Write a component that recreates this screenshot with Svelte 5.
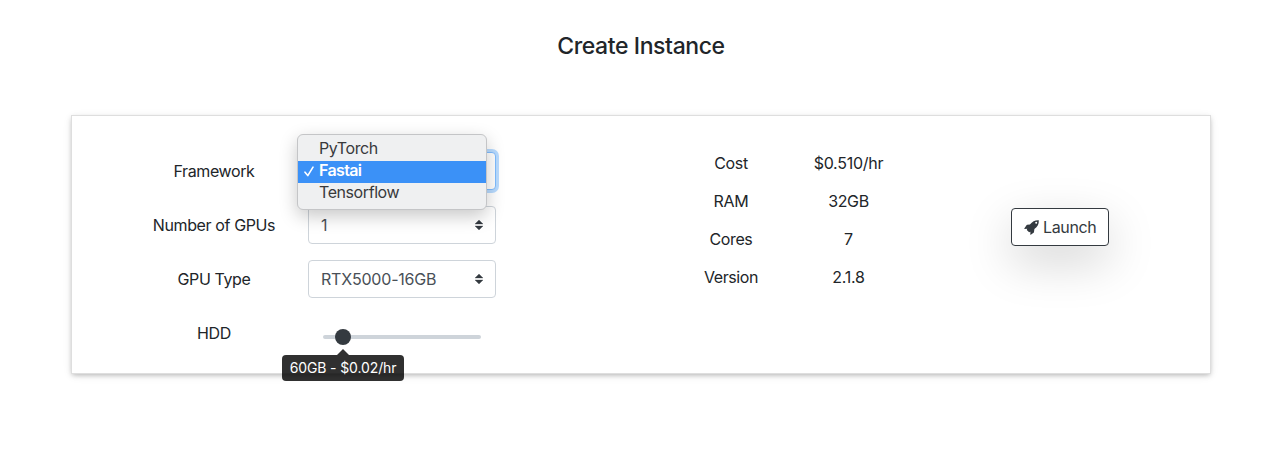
<script>
  const frameworks = ['PyTorch', 'Fastai', 'Tensorflow'];
  const framework = 'Fastai';
  const specs = [
    { label: 'Cost', value: '$0.510/hr', ls: -0.35, vs: -0.25 },
    { label: 'RAM', value: '32GB', ls: -0.3, vs: -0.4 },
    { label: 'Cores', value: '7', ls: -0.4, vs: 0 },
    { label: 'Version', value: '2.1.8', ls: -0.4, vs: -0.2 }
  ];
</script>

{#snippet arrows()}
  <svg class="arrows" viewBox="0 0 4 5"><path d="M2 0L0 2h4zm0 5L0 3h4z" /></svg>
{/snippet}

<main>
  <h1>Create Instance</h1>
  <section class="card">
    <div class="form">
      <div class="field">
        <span class="label">Framework</span>
        <div class="select focused">
          <ul class="menu">
            {#each frameworks as name}
              <li class:active={name === framework}>
                {#if name === framework}
                  <svg class="check" viewBox="0 0 10 11"><path d="M1 6.2L3.8 9.6L9 1.2" /></svg>
                {/if}
                <span>{name}</span>
              </li>
            {/each}
          </ul>
        </div>
      </div>
      <div class="field">
        <span class="label">Number of GPUs</span>
        <div class="select"><span>1</span>{@render arrows()}</div>
      </div>
      <div class="field">
        <span class="label">GPU Type</span>
        <div class="select"><span>RTX5000-16GB</span>{@render arrows()}</div>
      </div>
      <div class="field">
        <span class="label">HDD</span>
        <div class="slider">
          <div class="track">
            <div class="thumb"><div class="tip"><span>60GB - $0.02/hr</span></div></div>
          </div>
        </div>
      </div>
    </div>
    <div class="specs">
      {#each specs as s}
        <div class="spec">
          <span style="letter-spacing: {s.ls}px">{s.label}</span>
          <span style="letter-spacing: {s.vs}px">{s.value}</span>
        </div>
      {/each}
    </div>
    <div class="action">
      <button>
        <svg viewBox="0 0 15 15"><path fill-rule="evenodd" d="M14.8 .3C11 .1 8.4 1.5 5.9 4.6L3.1 4.8Q2.7 4.9 2.5 5.2L.3 8.5Q.2 8.9 .6 8.9L3.2 8.8L2.8 10L5.1 12.2L6.4 11.8L6.3 14.5Q6.4 14.9 6.8 14.7L9.9 12.6L10.4 9.1C13.6 6.6 15 4.2 14.8 .3ZM12.2 1.8A1 1 0 1 1 12.2 3.8A1 1 0 1 1 12.2 1.8Z" /></svg>
        <span>Launch</span>
      </button>
    </div>
  </section>
</main>

<style>
  :global(body) {
    background: #fff;
  }
  main {
    box-sizing: border-box;
    height: 454px;
    padding: 31px 69px 0 72px;
    font: 16px/24px Inter, sans-serif;
    letter-spacing: -0.38px;
    color: #212529;
    overflow: hidden;
  }
  h1 {
    margin: 0 0 55px;
    font-size: 23px;
    line-height: 30px;
    font-weight: 500;
    letter-spacing: -0.4px;
    text-align: center;
  }
  .card {
    box-sizing: border-box;
    height: 257px;
    display: grid;
    grid-template-columns: 424px 1fr 302px;
    box-shadow: 0 0 0 1px #dedede, 0 2px 5px rgba(0, 0, 0, 0.26), 0 2px 10px rgba(0, 0, 0, 0.08);
  }
  .form {
    display: flex;
    flex-direction: column;
    gap: 16px;
    padding: 36px 0 0 48px;
  }
  .field {
    display: grid;
    grid-template-columns: 188px 188px;
    height: 38px;
  }
  .label {
    text-align: center;
    line-height: 38px;
  }
  .select {
    box-sizing: border-box;
    position: relative;
    display: flex;
    align-items: center;
    justify-content: space-between;
    padding: 0 12px;
    border: 1px solid #ced4da;
    border-radius: 4px;
    color: #495057;
    background: #fff;
    letter-spacing: -0.2px;
  }
  .focused {
    border-color: #80bdff;
    box-shadow: 0 0 0 3px #b8dbff;
  }
  .arrows {
    width: 8px;
    height: 10px;
    overflow: visible;
    fill: #343a40;
    stroke: #343a40;
    stroke-width: 0.15;
    stroke-linejoin: round;
  }
  .menu {
    box-sizing: border-box;
    position: absolute;
    z-index: 2;
    left: -12px;
    top: -19px;
    width: 190px;
    height: 76px;
    margin: 0;
    padding: 4px 0 0;
    list-style: none;
    background: #eff0f1;
    border: 1px solid #c4c5c7;
    border-radius: 6px;
    box-shadow: 0 6px 18px rgba(0, 0, 0, 0.22);
    color: #38393b;
    letter-spacing: -0.42px;
  }
  .menu li {
    box-sizing: border-box;
    display: flex;
    height: 22px;
    padding-left: 21px;
    line-height: 18px;
    position: relative;
  }
  .menu .active {
    background: #3b91f7;
    color: #fff;
    font-weight: 600;
    letter-spacing: -0.65px;
  }
  .check {
    position: absolute;
    left: 6px;
    top: 5px;
    width: 10px;
    height: 11px;
    fill: none;
    stroke: #fff;
    stroke-width: 1.6;
    stroke-linecap: round;
    stroke-linejoin: round;
  }
  .slider {
    padding: 21px 15px 0;
  }
  .track {
    height: 4px;
    border-radius: 2px;
    background: #ced4da;
  }
  .thumb {
    position: relative;
    top: -6px;
    left: 12px;
    width: 16px;
    height: 16px;
    border-radius: 50%;
    background: #343a40;
  }
  .tip {
    position: absolute;
    top: 26px;
    left: -53px;
    width: 122px;
    height: 26px;
    border-radius: 4px;
    background: rgba(0, 0, 0, 0.81);
    color: #fff;
    font-size: 14px;
    line-height: 26px;
    letter-spacing: -0.12px;
    text-align: center;
    white-space: nowrap;
  }
  .tip::before {
    content: '';
    position: absolute;
    left: 55px;
    top: -6px;
    border: 6px solid transparent;
    border-top: 0;
    border-bottom-color: rgba(0, 0, 0, 0.81);
  }
  .specs {
    display: flex;
    flex-direction: column;
    gap: 14px;
    padding: 35px 0 0 176px;
  }
  .spec {
    display: grid;
    grid-template-columns: 118px 117px;
    text-align: center;
  }
  .action {
    padding: 92px 0 0 103px;
  }
  button {
    box-sizing: border-box;
    display: flex;
    align-items: center;
    gap: 4px;
    width: 98px;
    height: 38px;
    margin: 0;
    padding: 0 12px;
    border: 1px solid #343a40;
    border-radius: 4px;
    background: #fff;
    color: #343a40;
    font: inherit;
    letter-spacing: -0.35px;
    box-shadow: 0 16px 48px rgba(0, 0, 0, 0.176);
  }
  button svg {
    flex: none;
    width: 15px;
    height: 15px;
    fill: #343a40;
  }
</style>
